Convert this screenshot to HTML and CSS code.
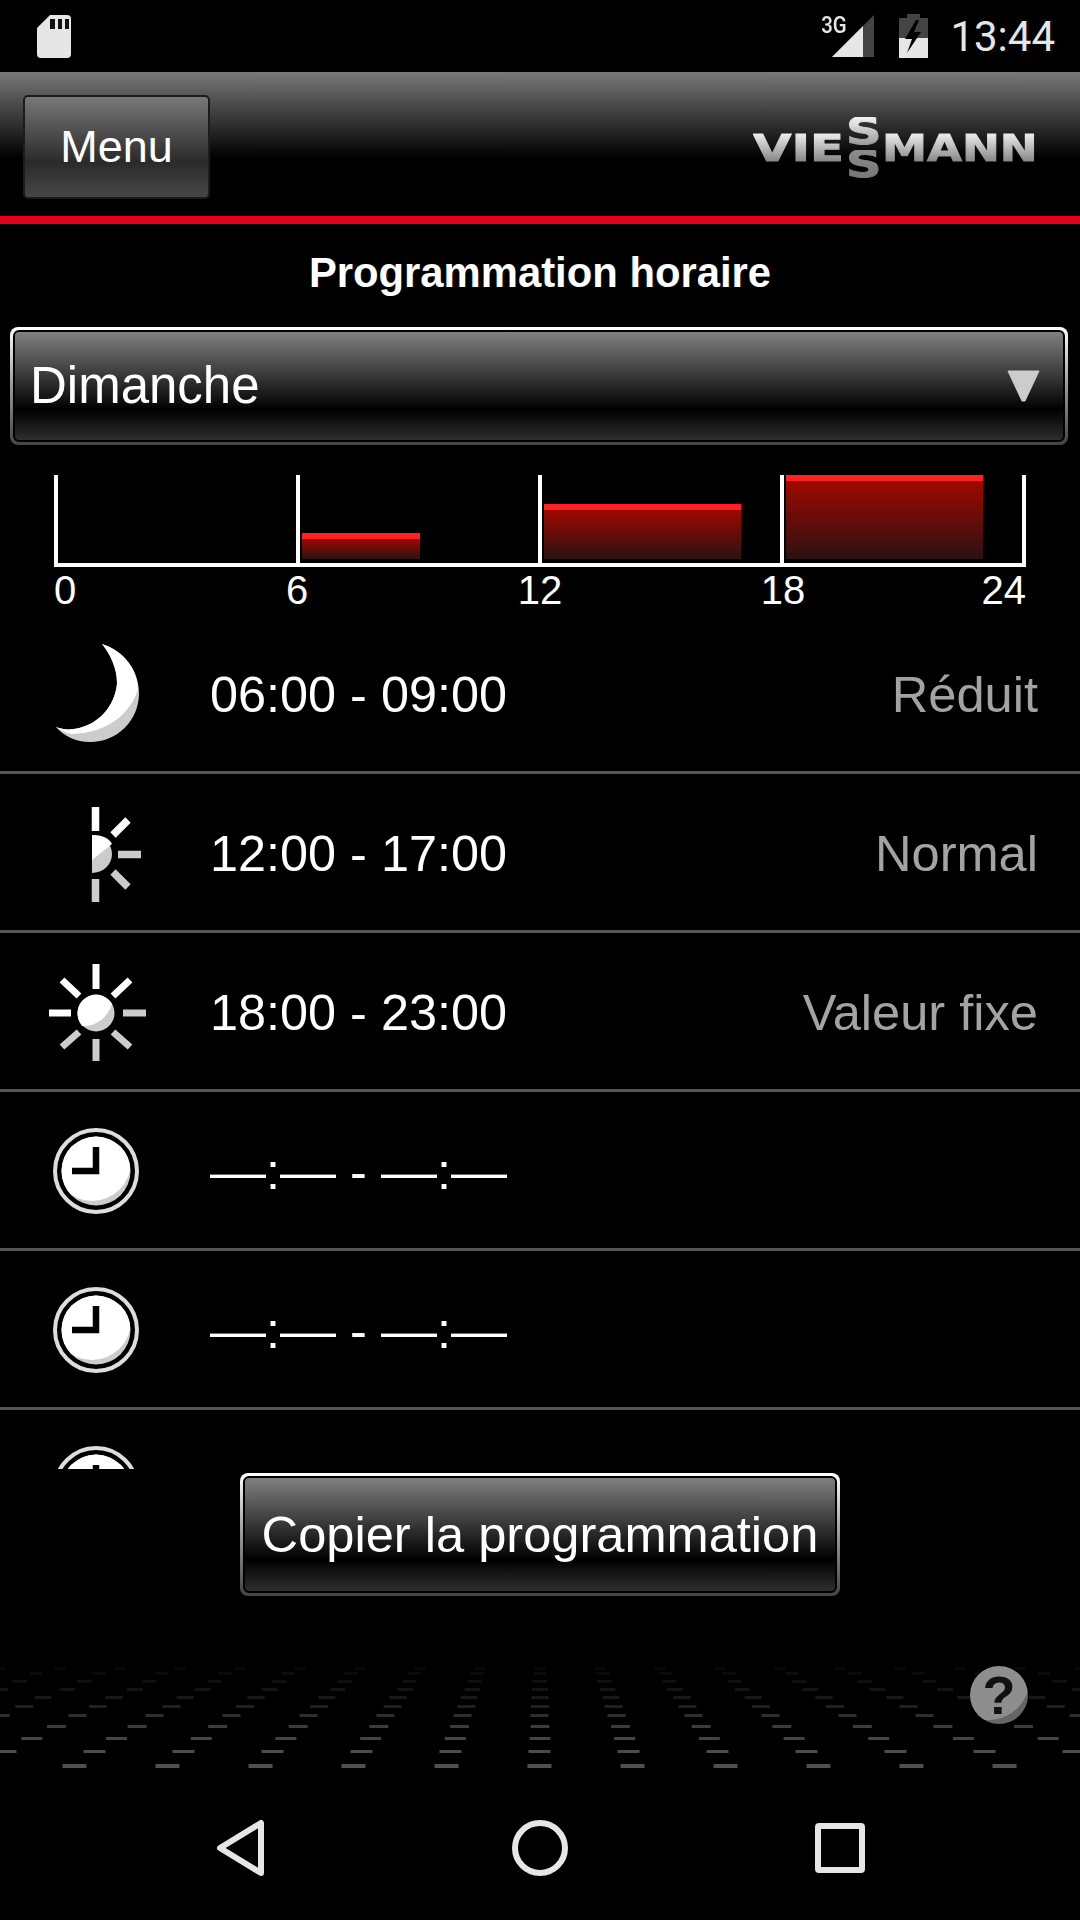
FILE: index.html
```html
<!DOCTYPE html>
<html lang="fr">
<head>
    <meta charset="UTF-8">
    <meta name="viewport" content="width=device-width, initial-scale=1.0">
    <title>Programmation horaire</title>
    <link rel="stylesheet" href="styles.css">
</head>
<body>
    <svg class="defs" width="0" height="0">
        <defs>
            <clipPath id="clock-face"><circle cx="50" cy="51" r="34.5"/></clipPath>
            <symbol id="clock" viewBox="0 0 100 100">
                <circle cx="50" cy="51" r="41" fill="none" stroke="#ddd" stroke-width="4"/>
                <circle cx="50" cy="51" r="34.5" fill="#ccc"/>
                <circle cx="46" cy="42" r="39" fill="#fff" clip-path="url(#clock-face)"/>
                <path d="M50 27V51H26" fill="none" stroke="#000" stroke-width="6.5"/>
            </symbol>
        </defs>
    </svg>

    <div class="status-bar">
        <svg class="sd-icon" width="34" height="43" viewBox="0 0 34 43">
            <path d="M13 0H30Q34 0 34 4V39Q34 43 30 43H4Q0 43 0 39V13Z" fill="#e6e6e6"/>
            <path d="M13 4h5v10h-5zM21 4h4v10h-4zM28 4h4v10h-4z" fill="#111"/>
        </svg>
        <div class="status-right">
            <span class="net-label">3G</span>
            <svg class="signal" width="42" height="42" viewBox="0 0 42 42">
                <path d="M0 42L42 0V42Z" fill="#444"/>
                <path d="M0 42L31 11V42Z" fill="#e6e6e6"/>
            </svg>
            <svg class="battery" width="29" height="44" viewBox="0 0 29 44">
                <path d="M0 4H8V0H21V4H29V44H0Z" fill="#444"/>
                <path d="M0 24H29V44H0Z" fill="#e6e6e6"/>
                <path d="M17 6L6 25H13L8 39L22 18H15L20 6Z" fill="#000"/>
            </svg>
            <span class="clock">13:44</span>
        </div>
    </div>

    <header class="top-bar">
        <button class="menu-btn">Menu</button>
        <div class="logo">
            <span class="logo-word logo-vie">VIE</span>
            <span class="logo-ess">
                <span class="logo-s">S</span>
                <span class="logo-s logo-s-low">S</span>
            </span>
            <span class="logo-word logo-mann">MANN</span>
        </div>
    </header>

    <h1 class="title">Programmation horaire</h1>

    <div class="raised select">
        <div class="raised-inner select-inner">
            <span class="select-label">Dimanche</span>
            <svg width="33" height="32" viewBox="0 0 33 32">
                <path d="M1 1H32L18 31H15Z" fill="#ccc" stroke="#ccc" stroke-linejoin="round"/>
            </svg>
        </div>
    </div>

    <section class="chart">
        <div class="plot">
            <div class="slot"></div>
            <div class="slot"><div class="bar" style="width: 50%; height: 26px"></div></div>
            <div class="slot"><div class="bar" style="width: 83.33%; height: 55px"></div></div>
            <div class="slot"><div class="bar" style="width: 83.33%; height: 84px"></div></div>
        </div>
        <div class="ticks">
            <span class="tick tick-first">0</span>
            <span class="tick">6</span>
            <span class="tick">12</span>
            <span class="tick">18</span>
            <span class="tick tick-last">24</span>
        </div>
    </section>

    <section class="periods">
        <div class="period">
            <svg class="period-icon" viewBox="0 0 100 100">
                <path d="M56 1C78 8 93 27 93 50C93 78 71 99 44 99C30 99 18 93 10 84C20 88 32 87 44 81C60 73 70 56 71 40C71 26 65 12 56 1Z" fill="#ccc"/>
                <path d="M56 1C78 8 91 26 92 46C85 70 62 90 26 91C20 90 14 87 10 84C20 88 32 87 44 81C60 73 70 56 71 40C71 26 65 12 56 1Z" fill="#fff"/>
            </svg>
            <span class="period-time">06:00 - 09:00</span>
            <span class="period-mode">Réduit</span>
        </div>
        <div class="period">
            <svg class="period-icon" viewBox="0 0 100 100">
                <path d="M46 33A20 19 0 0 1 46 71Z" fill="#ccc"/>
                <path d="M46 33C56 33 63 36 66 42L46 58Z" fill="#fff"/>
                <path d="M49.5 5V29M67 33L82 18" stroke="#fff" stroke-width="7.5" fill="none"/>
                <path d="M72 52.500H95M67 70L82 85M49.500 77V101" stroke="#ccc" stroke-width="7.500" fill="none"/>
            </svg>
            <span class="period-time">12:00 - 17:00</span>
            <span class="period-mode">Normal</span>
        </div>
        <div class="period">
            <svg class="period-icon" viewBox="0 0 100 100">
                <circle cx="50" cy="52" r="18.500" fill="#ccc"/>
                <path d="M31.500 52A18.500 18.500 0 0 1 66 43C62 56 50 66 36 65C33 61 31.500 57 31.500 52Z" fill="#fff"/>
                <path d="M50 3V28M3 52H25M16 19L33 35M84 19L67 35" stroke="#fff" stroke-width="7" fill="none"/>
                <path d="M50 78V101M77 52H100M16 86L33 71M84 86L67 71" stroke="#ccc" stroke-width="7" fill="none"/>
            </svg>
            <span class="period-time">18:00 - 23:00</span>
            <span class="period-mode">Valeur fixe</span>
        </div>
        <div class="period">
            <svg class="period-icon"><use href="#clock"/></svg>
            <span class="period-time">––:–– - ––:––</span>
        </div>
        <div class="period">
            <svg class="period-icon"><use href="#clock"/></svg>
            <span class="period-time">––:–– - ––:––</span>
        </div>
        <div class="period">
            <svg class="period-icon"><use href="#clock"/></svg>
        </div>
    </section>

    <div class="actions">
        <div class="raised copy-btn">
            <div class="raised-inner copy-btn-inner">Copier la programmation</div>
        </div>
    </div>

    <div class="floor">
        <div class="dash d1"></div>
        <div class="dash d2"></div>
        <div class="dash d3"></div>
        <div class="dash d4"></div>
        <div class="dash d5"></div>
        <div class="dash d6"></div>
        <div class="dash d7"></div>
        <div class="dash d8"></div>
        <div class="dash d9"></div>
        <div class="dash d10"></div>
        <div class="dash d11"></div>
        <div class="help">?</div>
    </div>

    <nav class="nav-bar">
        <svg width="60" height="60" viewBox="0 0 60 60">
            <path d="M51 5V55L10 30Z" fill="none" stroke="#e6e6e6" stroke-width="6" stroke-linejoin="round"/>
        </svg>
        <svg width="60" height="60" viewBox="0 0 60 60">
            <circle cx="30" cy="30" r="25" fill="none" stroke="#e6e6e6" stroke-width="6"/>
        </svg>
        <svg width="60" height="60" viewBox="0 0 60 60">
            <rect x="8" y="8" width="44" height="44" rx="1" fill="none" stroke="#e6e6e6" stroke-width="6"/>
        </svg>
    </nav>
</body>
</html>
```
FILE: styles.css
```css
* {
    margin: 0;
    padding: 0;
    box-sizing: border-box;
}

body {
    width: 1080px;
    height: 1920px;
    background: #000;
    color: #fff;
    font-family: "Liberation Sans", Arial, sans-serif;
    overflow: hidden;
}

.defs {
    display: block;
    height: 0;
}

/* status bar */
.status-bar {
    height: 72px;
    display: flex;
    justify-content: space-between;
    align-items: center;
    padding: 0 25px 0 37px;
}

.status-right {
    display: flex;
    align-items: center;
    height: 72px;
}

.net-label {
    font-family: Roboto, sans-serif;
    font-size: 24px;
    font-weight: 500;
    color: #e6e6e6;
    transform: scaleX(0.85);
    margin: -22px -17px 0 0;
}

.signal {
    margin-right: 25px;
}

.battery {
    margin-right: 22px;
}

.clock {
    font-family: Roboto, sans-serif;
    font-size: 42px;
    color: #e6e6e6;
}

/* header */
.top-bar {
    height: 152px;
    display: flex;
    justify-content: space-between;
    align-items: center;
    padding: 0 42px 0 23px;
    background: linear-gradient(#787878 0%, #000 60%);
    border-bottom: 8px solid #e2001a;
}

.menu-btn {
    width: 187px;
    height: 104px;
    margin-top: 6px;
    border: 2px solid #1c1c1c;
    border-radius: 5px;
    background: linear-gradient(#787878 0%, #2a2a2a 65%, #474747 100%);
    color: #fff;
    font-family: inherit;
    font-size: 45px;
}

.logo {
    display: flex;
    align-items: center;
    width: 285px;
    height: 62px;
    margin-top: 7px;
    font-family: "DejaVu Sans", sans-serif;
    font-weight: bold;
    font-size: 38px;
}

.logo-word {
    line-height: 30px;
    transform-origin: left center;
    background: linear-gradient(#f0f0f0, #808080);
    -webkit-background-clip: text;
    background-clip: text;
    color: transparent;
    -webkit-text-stroke: 1px transparent;
}

.logo-vie {
    width: 95px;
    transform: scaleX(1.31);
}

.logo-mann {
    width: 154px;
    margin-left: 4px;
    transform: scaleX(1.19);
}

.logo-ess {
    width: 32px;
    margin-left: -2px;
    display: flex;
    flex-direction: column;
    gap: 5px;
}

.logo-s {
    line-height: 28px;
    transform-origin: left center;
    transform: scaleX(1.3);
    background: linear-gradient(#f4f4f4, #999);
    -webkit-background-clip: text;
    background-clip: text;
    color: transparent;
    -webkit-text-stroke: 1px transparent;
}

.logo-s-low {
    background-image: linear-gradient(#8c8c8c, #777);
}

.title {
    height: 103px;
    padding-bottom: 6px;
    font-size: 41.8px;
    line-height: 97px;
    text-align: center;
}

/* select and copy button share the same bevel */
.raised {
    padding: 3px;
    border-radius: 8px;
    background: linear-gradient(#fff 0%, #999 50%, #444 100%);
}

.raised-inner {
    height: 100%;
    border: 2px solid #000;
    border-radius: 6px;
    background: linear-gradient(#808080 0%, #000 72%, #2e2e2e 100%);
}

.select {
    height: 118px;
    margin: 0 12px 0 10px;
    font-size: 51px;
}

.select-inner {
    display: flex;
    justify-content: space-between;
    align-items: center;
    padding: 0 23px 0 15px;
}

.select-label {
    padding-bottom: 2px;
}

/* day chart */
.chart {
    margin: 30px 54px 0 54px;
}

.plot {
    height: 92px;
    display: grid;
    grid-template-columns: repeat(4, 1fr);
    border-right: 4px solid #fff;
    border-bottom: 4px solid #fff;
}

.slot {
    display: flex;
    align-items: flex-end;
    border-left: 4px solid #fff;
    padding: 0 0 4px 2px;
}

.bar {
    background: linear-gradient(#f22 0, #f22 6px, #a00800 6px, #2a1212 100%);
}

.ticks {
    height: 48px;
    display: flex;
    justify-content: space-between;
    font-size: 40px;
    line-height: 46px;
}

.tick {
    width: 0;
    display: flex;
    justify-content: center;
}

.tick-first {
    justify-content: flex-start;
}

.tick-last {
    justify-content: flex-end;
}

/* period list */
.periods {
    height: 854px;
    overflow: hidden;
}

.period {
    height: 159px;
    display: flex;
    align-items: center;
    padding: 0 42px 0 46px;
    border-bottom: 3px solid #555;
    font-size: 50.6px;
}

.period-icon {
    width: 100px;
    height: 100px;
    margin-right: 64px;
}

.period-time {
    flex: 1;
    padding-top: 2px;
    font-size: 50.4px;
}

.period-mode {
    padding-top: 2px;
    color: #a3a3a3;
}

/* copy button */
.actions {
    padding-top: 4px;
    display: flex;
    justify-content: center;
}

.copy-btn {
    width: 600px;
    height: 123px;
    font-size: 50.6px;
}

.copy-btn-inner {
    display: flex;
    justify-content: center;
    align-items: center;
}

/* perspective dots behind the help icon */
.floor {
    height: 204px;
    padding-top: 71px;
    position: relative;
}

.dash {
    height: 3px;
    background-position: center;
    background-image: linear-gradient(to right, transparent calc(50% - var(--w) / 2), var(--c) calc(50% - var(--w) / 2), var(--c) calc(50% + var(--w) / 2), transparent calc(50% + var(--w) / 2));
    background-size: var(--p) 100%;
}

.d1 { --p: 60px; --w: 12px; --c: #080808; }
.d2 { --p: 63px; --w: 13px; --c: #0b0b0b; margin-top: 2px; }
.d3 { --p: 65px; --w: 14px; --c: #0f0f0f; margin-top: 5px; }
.d4 { --p: 67.5px; --w: 15px; --c: #131313; margin-top: 5px; }
.d5 { --p: 71px; --w: 16px; --c: #181818; margin-top: 5px; }
.d6 { --p: 73.7px; --w: 17px; --c: #202020; margin-top: 6px; }
.d7 { --p: 77px; --w: 18px; --c: #2e2e2e; margin-top: 6px; }
.d8 { --p: 80.6px; --w: 19px; --c: #3c3c3c; margin-top: 8px; }
.d9 { --p: 84.7px; --w: 20px; --c: #444; margin-top: 9px; }
.d10 { --p: 89px; --w: 22px; --c: #4c4c4c; margin-top: 10px; }
.d11 { --p: 93px; --w: 24px; --c: #505050; height: 4px; margin-top: 11px; }

.help {
    position: absolute;
    left: 970px;
    top: 70px;
    width: 58px;
    height: 58px;
    border-radius: 50%;
    background: radial-gradient(circle at 32% 22%, #8e8e8e 68%, #666 69%);
    color: #111;
    font-weight: bold;
    font-size: 54px;
    line-height: 58px;
    text-align: center;
}

/* android nav */
.nav-bar {
    height: 120px;
    display: flex;
    justify-content: space-between;
    align-items: center;
    padding: 0 210px 24px;
}
```
